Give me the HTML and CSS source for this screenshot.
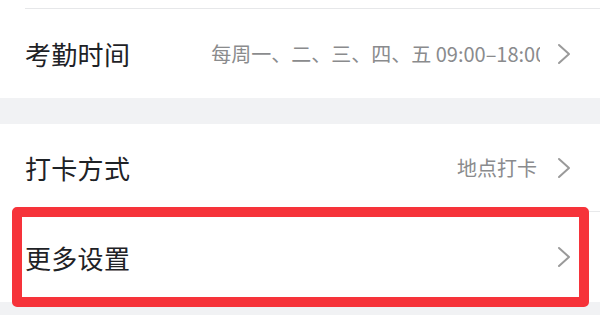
FILE: index.html
```html
<!DOCTYPE html>
<html lang="zh-CN">
<head>
<meta charset="utf-8">
<link rel="stylesheet" href="styles.css">
</head>
<body>
<div class="page">
  <div class="group first">
    <div class="row">
      <span class="title">考勤时间</span>
      <span class="value clip">每周一、二、三、四、五 09:00–18:00</span>
      <svg class="chev" width="14" height="22" viewBox="0 0 14 22"><polyline points="2,2 12,11 2,20" fill="none" stroke="#9a9a9a" stroke-width="2" stroke-linecap="round" stroke-linejoin="round"/></svg>
    </div>
  </div>
  <div class="group second">
    <div class="row divided">
      <span class="title">打卡方式</span>
      <span class="value">地点打卡</span>
      <svg class="chev" width="14" height="22" viewBox="0 0 14 22"><polyline points="2,2 12,11 2,20" fill="none" stroke="#9a9a9a" stroke-width="2" stroke-linecap="round" stroke-linejoin="round"/></svg>
    </div>
    <div class="row last">
      <span class="title">更多设置</span>
      <span class="value"></span>
      <svg class="chev" width="14" height="22" viewBox="0 0 14 22"><polyline points="2,2 12,11 2,20" fill="none" stroke="#9a9a9a" stroke-width="2" stroke-linecap="round" stroke-linejoin="round"/></svg>
      <div class="highlight"></div>
    </div>
  </div>
</div>
</body>
</html>
```
FILE: styles.css
```css
html, body {
  margin: 0;
  padding: 0;
  background: #f1f2f4;
  font-family: "Noto Sans CJK SC", "Noto Sans", sans-serif;
}
.page {
  width: 600px;
  height: 315px;
  overflow: hidden;
}
.group {
  background: #ffffff;
}
.first {
  padding-top: 8px;
  margin-bottom: 26px;
}
.first .row {
  border-top: 1px solid #e6e7e9;
  height: 89px;
}
.row {
  position: relative;
  display: flex;
  align-items: center;
  margin-left: 25px;
  padding-right: 29px;
  height: 87px;
}
.divided {
  border-bottom: 1px solid #e8e9eb;
}
.last {
  height: 90px;
}
.title {
  flex: none;
  font-size: 26px;
  color: #1e2226;
  letter-spacing: 0.3px;
}
.value {
  flex: 1;
  min-width: 0;
  margin-left: 40px;
  margin-right: 20px;
  font-size: 20px;
  color: #8a8b8d;
  text-align: right;
  white-space: nowrap;
  overflow: hidden;
}
.value.clip {
  margin-left: 81px;
  margin-right: 17px;
  text-align: left;
}
.chev {
  flex: none;
  display: block;
}
.highlight {
  position: absolute;
  left: -13px;
  right: 11px;
  top: -5px;
  bottom: -5px;
  border: 10px solid #f6333a;
  border-radius: 5px;
  box-sizing: border-box;
}
```
